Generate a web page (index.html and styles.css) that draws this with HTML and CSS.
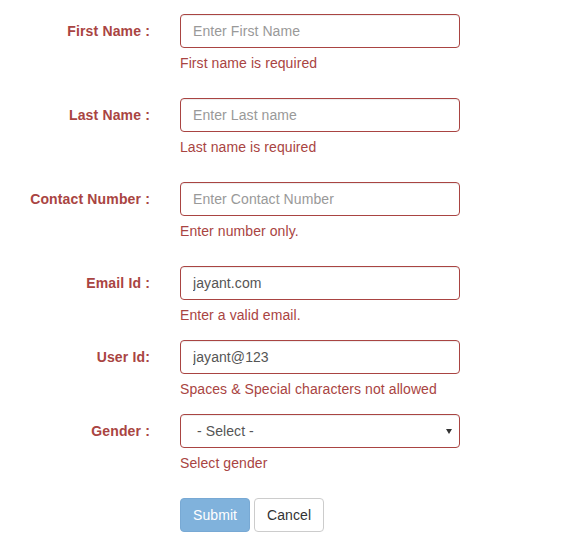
FILE: index.html
```html
<!DOCTYPE html>
<html>
<head>
<meta charset="utf-8">
<link rel="stylesheet" href="styles.css">
</head>
<body>
<form class="form">
  <div class="group">
    <label class="label">First Name :</label>
    <div class="field">
      <input class="control" type="text" placeholder="Enter First Name">
      <span class="help">First name is required</span>
    </div>
  </div>
  <div class="group">
    <label class="label">Last Name :</label>
    <div class="field">
      <input class="control" type="text" placeholder="Enter Last name">
      <span class="help">Last name is required</span>
    </div>
  </div>
  <div class="group">
    <label class="label">Contact Number :</label>
    <div class="field">
      <input class="control" type="text" placeholder="Enter Contact Number">
      <span class="help">Enter number only.</span>
    </div>
  </div>
  <div class="group">
    <label class="label">Email Id :</label>
    <div class="field">
      <input class="control" type="text" value="jayant.com">
      <span class="help help-tight">Enter a valid email.</span>
    </div>
  </div>
  <div class="group">
    <label class="label">User Id:</label>
    <div class="field">
      <input class="control" type="text" value="jayant@123">
      <span class="help help-tight">Spaces &amp; Special characters not allowed</span>
    </div>
  </div>
  <div class="group">
    <label class="label">Gender :</label>
    <div class="field">
      <span class="select-wrap">
        <select class="control select">
          <option>- Select -</option>
        </select>
      </span>
      <span class="help">Select gender</span>
    </div>
  </div>
  <div class="group">
    <div class="label"></div>
    <div class="field actions">
      <button type="button" class="btn btn-primary" disabled>Submit</button>
      <button type="button" class="btn btn-default">Cancel</button>
    </div>
  </div>
</form>
</body>
</html>
```
FILE: styles.css
```css
html, body {
  margin: 0;
  padding: 0;
  background: #fff;
}
body {
  font-family: "Liberation Sans", Arial, Helvetica, sans-serif;
  font-size: 14px;
  line-height: 20px;
  color: #333;
  letter-spacing: 0.08px;
}
.form {
  padding-top: 14px;
}
.group {
  display: flex;
  margin-bottom: 15px;
}
.label {
  width: 150px;
  flex: none;
  text-align: right;
  font-weight: bold;
  color: #a94442;
  padding-top: 7px;
  box-sizing: border-box;
  line-height: 20px;
  letter-spacing: 0.15px;
}
.field {
  margin-left: 30px;
  width: 280px;
  display: flex;
  flex-direction: column;
}
.control {
  display: block;
  box-sizing: border-box;
  width: 280px;
  height: 34px;
  margin: 0;
  padding: 6px 12px;
  font-family: "Liberation Sans", Arial, Helvetica, sans-serif;
  font-size: 14px;
  line-height: 20px;
  letter-spacing: 0.08px;
  color: #555;
  background: #fff;
  border: 1px solid #a94442;
  border-radius: 4px;
  box-shadow: inset 0 1px 1px rgba(0,0,0,.075);
  outline: none;
}
.control::placeholder {
  color: #999;
  opacity: 1;
}
.select-wrap {
  position: relative;
  display: block;
}
.select {
  -webkit-appearance: none;
  appearance: none;
  padding-left: 16px;
}
.select-wrap::after {
  content: "";
  position: absolute;
  left: 266px;
  top: 15px;
  width: 0;
  height: 0;
  border-left: 3px solid transparent;
  border-right: 3px solid transparent;
  border-top: 5px solid #333;
  pointer-events: none;
}
.help {
  display: block;
  margin-top: 5px;
  margin-bottom: 10px;
  color: #a94442;
}
.help-tight {
  margin-bottom: 0;
}
.actions {
  flex-direction: row;
  gap: 4px;
}
.btn {
  box-sizing: border-box;
  height: 34px;
  padding: 6px 12px;
  font-family: "Liberation Sans", Arial, Helvetica, sans-serif;
  font-size: 14px;
  line-height: 20px;
  letter-spacing: 0.08px;
  border: 1px solid transparent;
  border-radius: 4px;
  margin: 0;
}
.btn-primary {
  color: #fff;
  background: #80b2dc;
  border-color: #78a9d4;
}
.btn-default {
  color: #333;
  background: #fff;
  border-color: #ccc;
}
```
